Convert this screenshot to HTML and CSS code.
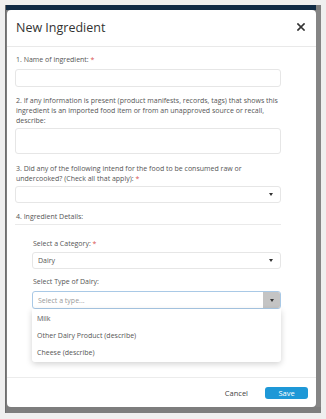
FILE: index.html
```html
<!DOCTYPE html>
<html>
<head>
<meta charset="utf-8">
<link rel="stylesheet" href="styles.css">
</head>
<body>
<div class="frame">
  <div class="topbar"></div>
  <div class="stage">
    <div class="modal">
      <div class="modal-header">
        <h1 class="title">New Ingredient</h1>
        <svg class="close" width="8" height="8" viewBox="0 0 8 8"><path d="M1 1L7 7M7 1L1 7" stroke="#333" stroke-width="1.7" stroke-linecap="square"/></svg>
      </div>
      <div class="modal-body">
        <div class="group g1">
          <div class="label">1. Name of ingredient: <span class="req">*</span></div>
          <div class="input"></div>
        </div>
        <div class="group g2">
          <div class="label">2. If any information is present (product manifests, records, tags) that shows this ingredient is an imported food item or from an unapproved source or recall, describe:</div>
          <div class="input textarea"></div>
        </div>
        <div class="group g3">
          <div class="label"><span class="line">3. Did any of the following intend for the food to be consumed raw or</span><br><span class="line">undercooked? (Check all that apply):</span> <span class="req">*</span></div>
          <div class="input select"><span></span><i class="caret"></i></div>
        </div>
        <div class="group g4">
          <div class="label section-label">4. Ingredient Details:</div>
          <div class="sub">
            <div class="label">Select a Category: <span class="req">*</span></div>
            <div class="input select"><span class="value">Dairy</span><i class="caret"></i></div>
            <div class="label label-type">Select Type of Dairy:</div>
            <div class="combo">
              <div class="input select focus"><span class="placeholder">Select a type...</span><span class="combo-btn"><i class="caret"></i></span></div>
              <ul class="dropdown">
                <li>Milk</li>
                <li>Other Dairy Product (describe)</li>
                <li>Cheese (describe)</li>
              </ul>
            </div>
          </div>
        </div>
      </div>
      <div class="modal-footer">
        <button class="btn-cancel">Cancel</button>
        <button class="btn-save">Save</button>
      </div>
    </div>
    <div class="scrollbar"></div>
  </div>
</div>
</body>
</html>
```

FILE: styles.css
```css
* { box-sizing: border-box; }
html, body { margin: 0; padding: 0; }
body {
  background: #efefef;
  width: 326px;
  height: 419px;
  padding: 5px 5px 6px 5px;
  font-family: "Open Sans", "Liberation Sans", sans-serif;
  overflow: hidden;
}
.frame {
  width: 316px;
  height: 408px;
  background: #7d7d7d;
  display: flex;
  flex-direction: column;
  border-left: 1px solid #6e6e6e;
}
.topbar {
  height: 5px;
  background: #112b45;
  margin-right: 5px;
}
.stage {
  flex: 1;
  display: flex;
  padding-left: 1px;
  padding-bottom: 6px;
}
.scrollbar {
  width: 5px;
  margin-left: auto;
  background: #858585;
}
.modal {
  width: 309px;
  height: 397px;
  background: #fff;
  border-radius: 4px;
  display: flex;
  flex-direction: column;
}
.modal-header {
  height: 37px;
  border-bottom: 1px solid #e9e9e9;
  display: flex;
  align-items: center;
  padding: 0 11px 2px 9px;
}
.title {
  margin: 0;
  font-size: 12.5px;
  font-weight: 400;
  color: #333;
  flex: 1;
}
.close { display: block; }
.modal-body {
  flex: 1;
  padding: 8px 35px 0 8px;
  font-size: 7px;
  color: #555;
}
.label {
  line-height: 10px;
  padding-left: 1px;
}
.req { color: #d9534f; }
.input {
  height: 18px;
  border: 1px solid #e6e6e6;
  border-radius: 3px;
  background: #fff;
}
.g1 .label { margin-bottom: 4px; }
.g2 { margin-top: 9px; }
.g2 .label { margin-bottom: 2px; }
.textarea { height: 26px; }
.g3 { margin-top: 10px; }
.g3 .label { margin-bottom: 2px; }
.select {
  height: 17px;
  display: flex;
  align-items: center;
  padding-left: 5px;
  position: relative;
}
.select > span:first-child { flex: 1; }
.caret {
  display: block;
  width: 0;
  height: 0;
  border-left: 2.5px solid transparent;
  border-right: 2.5px solid transparent;
  border-top: 3px solid #333;
  margin-right: 7px;
}
.g4 { margin-top: 9px; }
.section-label {
  padding-bottom: 2px;
  border-bottom: 1px solid #eaeaea;
}
.sub {
  padding: 14px 0 0 17px;
}
.sub > .label { margin-bottom: 3px; }
.value { color: #555; }
.label-type { margin-top: 8px; }
.sub > .label.label-type { margin-bottom: 4px; }
.combo { position: relative; }
.focus { border-color: #a9c9e6; padding-right: 0; height: 18px; }
.placeholder { color: #9a9a9a; }
.combo-btn {
  width: 17px;
  align-self: stretch;
  background: #c4c4c4;
  display: flex;
  align-items: center;
  justify-content: center;
  border-radius: 0 2px 2px 0;
}
.combo-btn .caret { margin: 0; }
.dropdown {
  position: absolute;
  left: 0;
  right: 0;
  top: 18px;
  margin: 0;
  padding: 1px 0 1px;
  list-style: none;
  background: #fff;
  border-radius: 0 0 3px 3px;
  box-shadow: 0 2px 6px rgba(0,0,0,0.18);
  z-index: 2;
}
.dropdown li {
  height: 17px;
  line-height: 17px;
  padding-left: 5px;
  color: #555;
}
.modal-footer {
  height: 30px;
  border-top: 1px solid #ececec;
  display: flex;
  align-items: center;
  justify-content: flex-end;
  padding: 0 8px 0 0;
}
.modal-footer button {
  font-family: "Open Sans", "Liberation Sans", sans-serif;
  font-size: 7.5px;
  border: none;
  cursor: pointer;
}
.btn-cancel {
  background: transparent;
  color: #444;
  margin-right: 17px;
  padding: 0;
}
.btn-save {
  background: #1e98d7;
  color: #fff;
  width: 43px;
  height: 12px;
  border-radius: 3px;
  padding: 0;
  line-height: 12px;
}
```
